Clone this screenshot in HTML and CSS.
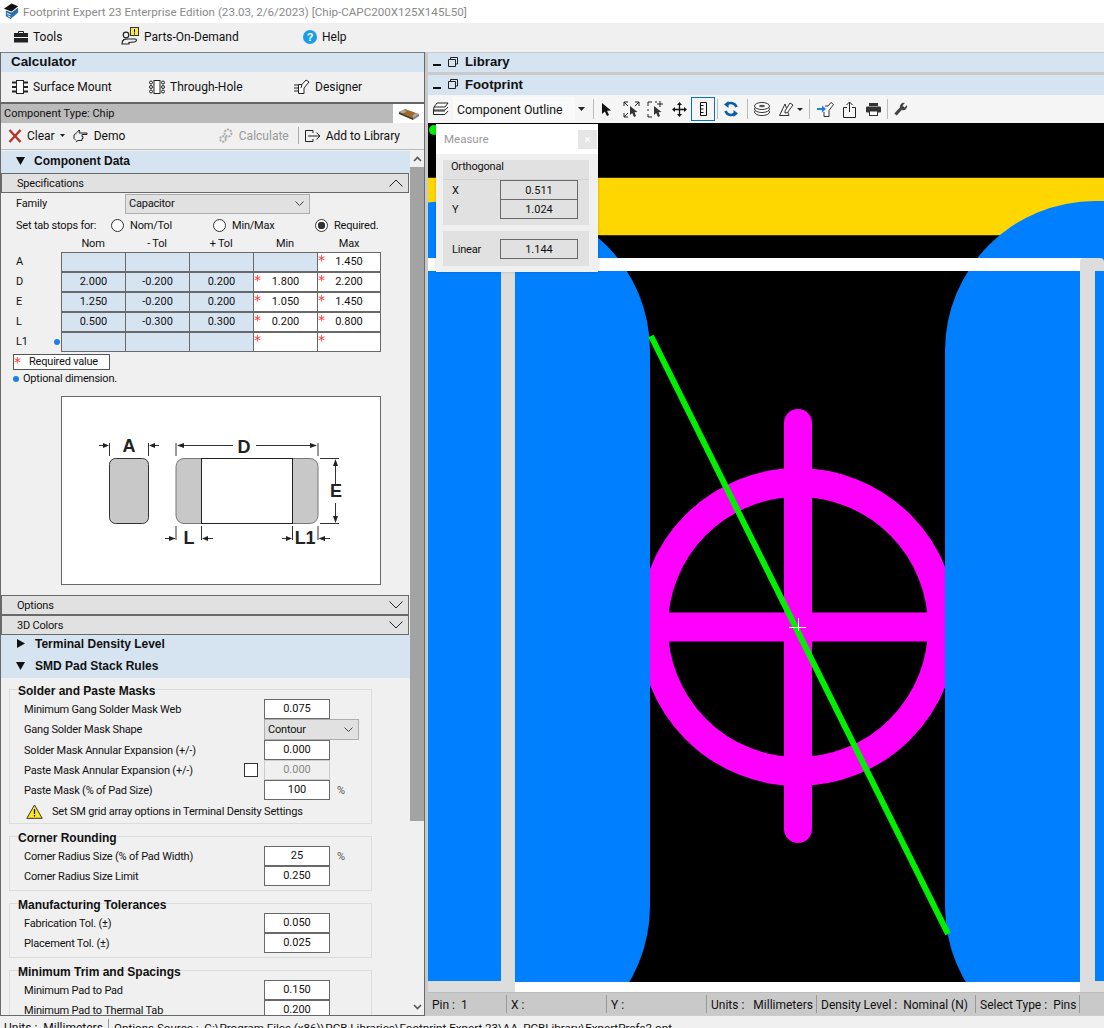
FILE: index.html
```html
<!DOCTYPE html>
<html lang="en">
<head>
    <meta charset="UTF-8">
    <title>Footprint Expert 23 Enterprise Edition</title>
    <link rel="stylesheet" href="styles.css">
</head>
<body>
<div class="app">
    <div class="titlebar">
        <svg class="title-icon" width="17" height="17" viewBox="0 0 18 18"><path d="M1 6 L9 0.500 L16 3.500 L9 9 Z" fill="#111"/><path d="M3 8 L9 10 L16 5 L16 10 L8 17 L3 14 Z" fill="#2a6fb5"/><path d="M4 11 L8 12.500 M5 13.500 L8 15" stroke="#fff"/></svg>
        <span>Footprint Expert 23 Enterprise Edition (23.03, 2/6/2023) [Chip-CAPC200X125X145L50]</span>
    </div>

    <div class="menubar">
        <div class="menu-item">
            <svg width="14" height="12" viewBox="0 0 14 12"><path d="M4.500 2.500 V0.500 H9.500 V2.500" fill="none" stroke="#222"/><rect y="2" width="14" height="4" fill="#222"/><rect y="7" width="14" height="4.500" fill="#222"/></svg>
            <span>Tools</span>
        </div>
        <div class="menu-item">
            <svg width="18" height="19" viewBox="0 0 18 19"><rect x="9.500" y="0.500" width="8" height="8" fill="#ffe64d" stroke="#333"/><path d="M13.500 2 V5.500 M13.500 6.200 V7.500" stroke="#111"/><circle cx="5" cy="8" r="2.800" fill="none" stroke="#222" stroke-width="1.200"/><path d="M1 17 C1 12 4 12 7 12 L14 12 C16 12 16 15 13 15 L8 15.500 L8 17 Z" fill="none" stroke="#222" stroke-width="1.200"/></svg>
            <span>Parts-On-Demand</span>
        </div>
        <div class="menu-item">
            <svg width="14" height="14" viewBox="0 0 14 14"><circle cx="7" cy="7" r="7" fill="#1c9be6"/><text x="7" y="11" text-anchor="middle" class="help-mark">?</text></svg>
            <span>Help</span>
        </div>
    </div>

    <div class="main">
        <div class="left-panel">
            <div class="calc-head">Calculator</div>

            <div class="tabs">
                <div class="tab">
                    <svg width="16" height="14" viewBox="0 0 16 14"><rect x="4.500" y="0.500" width="7" height="13" fill="#fff" stroke="#222"/><path d="M0 2.500 H4 M0 7 H4 M0 11.500 H4 M12 2.500 H16 M12 7 H16 M12 11.500 H16" stroke="#222" stroke-width="2"/></svg>
                    <span>Surface Mount</span>
                </div>
                <div class="tab">
                    <svg width="16" height="14" viewBox="0 0 16 14"><rect x="5" y="0.500" width="6" height="13" fill="#fff" stroke="#222"/><g fill="none" stroke="#222"><circle cx="2" cy="2.500" r="1.500"/><circle cx="2" cy="7" r="1.500"/><circle cx="2" cy="11.500" r="1.500"/><circle cx="14" cy="2.500" r="1.500"/><circle cx="14" cy="7" r="1.500"/><circle cx="14" cy="11.500" r="1.500"/></g></svg>
                    <span>Through-Hole</span>
                </div>
                <div class="tab">
                    <svg width="16" height="15" viewBox="0 0 16 15"><path d="M0 6 H4 M0 9 H4 M0 12 H4" stroke="#222"/><path d="M4.500 5.500 H8 L12 1 L15 3 L10 9 V14.500 H4.500 Z" fill="#fff" stroke="#222"/><path d="M8 5.500 L7 9" stroke="#222"/></svg>
                    <span>Designer</span>
                </div>
            </div>

            <div class="type-bar">
                <span>Component Type: Chip</span>
                <div class="type-chip">
                    <svg width="22" height="12" viewBox="0 0 22 12"><path d="M1 4 L7 1 L21 6 L15 10 Z" fill="#9a6b2c"/><path d="M1 4 L6 2 L9 3 L4 6 Z M15 7 L18 5 L21 6 L15 10 Z" fill="#aaa"/><path d="M1 4 L15 10 V12 L1 6 Z" fill="#4a3313"/><path d="M15 10 L21 6 V8 L15 12 Z" fill="#777"/></svg>
                </div>
            </div>

            <div class="actions">
                <svg width="14" height="14" viewBox="0 0 14 14"><path d="M1.500 1 L12.500 13 M12.500 1 L1.500 13" stroke="#b3342a" stroke-width="2.400"/></svg>
                <span class="action-text first-action">Clear</span>
                <svg class="caret-sm" width="5" height="3" viewBox="0 0 5 3"><path d="M0 0 H5 L2.500 3 Z" fill="#222"/></svg>
                <svg class="demo-icon" width="15" height="14" viewBox="0 0 15 14"><path d="M1 6 L4 3.500 L6 1 L7 2 L6 4 H14 V5.500 H9 M9 5.500 V7.500 H10 V9.500 H9 V11.500 H5 L3 13 M1 6 V9.500 L3 11.500" fill="none" stroke="#222"/></svg>
                <span class="action-text">Demo</span>
                <svg class="calc-icon" width="14" height="15" viewBox="0 0 14 15"><circle cx="9" cy="5" r="3.500" fill="none" stroke="#aaa" stroke-width="2" stroke-dasharray="2 1"/><circle cx="4" cy="11" r="2.800" fill="none" stroke="#aaa" stroke-width="2" stroke-dasharray="2 1"/></svg>
                <span class="action-text muted">Calculate</span>
                <div class="action-sep"></div>
                <svg width="16" height="12" viewBox="0 0 16 12"><path d="M8 3 V0.500 H0.500 V11.500 H8 V9 M3 6 H15 M11.500 2.500 L15 6 L11.500 9.500" fill="none" stroke="#222"/></svg>
                <span class="action-text add-lib">Add to Library</span>
            </div>

            <div class="scroll-area">
                <div class="scroll-content">
                    <div class="tree-head first">
                        <svg width="10" height="8" viewBox="0 0 10 8"><path d="M0 0 H9 L4.500 8 Z" fill="#111"/></svg>
                        <span>Component Data</span>
                    </div>
                    <div class="section-bar">
                        <span>Specifications</span>
                        <svg width="14" height="8" viewBox="0 0 14 8"><path d="M0.500 7.500 L7 1 L13.500 7.500" fill="none" stroke="#222"/></svg>
                    </div>

                    <div class="family-row">
                        <span class="family-label">Family</span>
                        <div class="select family-select">
                            <span>Capacitor</span>
                            <svg width="9" height="5" viewBox="0 0 9 5"><path d="M0.500 0.500 L4.500 4.500 L8.500 0.500" fill="none" stroke="#444"/></svg>
                        </div>
                    </div>

                    <div class="tab-stops">
                        <span class="tab-stops-label">Set tab stops for:</span>
                        <div class="radio-opt"><span class="radio"></span><span>Nom/Tol</span></div>
                        <div class="radio-opt"><span class="radio"></span><span>Min/Max</span></div>
                        <div class="radio-opt"><span class="radio checked"></span><span>Required.</span></div>
                    </div>

                    <div class="spec-heads">
                        <span>Nom</span><span>- Tol</span><span>+ Tol</span><span>Min</span><span>Max</span>
                    </div>
                    <div class="spec-row">
                        <span class="spec-label">A</span>
                        <div class="cell blue"></div><div class="cell blue"></div><div class="cell blue"></div><div class="cell blue"></div><div class="cell req">1.450</div>
                    </div>
                    <div class="spec-row">
                        <span class="spec-label">D</span>
                        <div class="cell blue">2.000</div><div class="cell blue">-0.200</div><div class="cell blue">0.200</div><div class="cell req">1.800</div><div class="cell req">2.200</div>
                    </div>
                    <div class="spec-row">
                        <span class="spec-label">E</span>
                        <div class="cell blue">1.250</div><div class="cell blue">-0.200</div><div class="cell blue">0.200</div><div class="cell req">1.050</div><div class="cell req">1.450</div>
                    </div>
                    <div class="spec-row">
                        <span class="spec-label">L</span>
                        <div class="cell blue">0.500</div><div class="cell blue">-0.300</div><div class="cell blue">0.300</div><div class="cell req">0.200</div><div class="cell req">0.800</div>
                    </div>
                    <div class="spec-row">
                        <span class="spec-label">L1<i class="dot"></i></span>
                        <div class="cell blue"></div><div class="cell blue"></div><div class="cell blue"></div><div class="cell req"></div><div class="cell req"></div>
                    </div>

                    <div class="required-note">Required value</div>
                    <div class="optional-note"><i class="dot"></i><span>Optional dimension.</span></div>

                    <div class="diagram">
                        <svg width="318" height="187" viewBox="62 397 318 187">
                            <rect x="109.500" y="458.500" width="39" height="65" rx="6" fill="#c8c8c8" stroke="#333"/>
                            <rect x="176" y="458.500" width="142" height="65" rx="8" fill="#c8c8c8" stroke="#777"/>
                            <rect x="201.500" y="458.500" width="91" height="65" fill="#fff" stroke="#222"/>
                            <g stroke="#333" fill="none">
                                <path d="M109.500 443 V456 M148.500 443 V456 M176 443 V456 M318 443 V456"/>
                                <path d="M99 445.500 H108 M150 445.500 H159 M178 445.500 H233 M256 445.500 H316"/>
                                <path d="M320 458.500 H339 M320 523.500 H339 M335.500 461 V484 M335.500 503 V521"/>
                                <path d="M176 526 V540 M201.500 526 V540 M292.500 526 V540 M318 526 V540"/>
                                <path d="M165 538.500 H175 M203 538.500 H213 M282 538.500 H291 M320 538.500 H330"/>
                            </g>
                            <g fill="#222">
                                <path d="M109 445.500 L103 443 V448 Z M149 445.500 L155 443 V448 Z M177 445.500 L184 443 V448 Z M317 445.500 L310 443 V448 Z"/>
                                <path d="M335.500 459 L333 466 H338 Z M335.500 523 L333 516 H338 Z"/>
                                <path d="M175.500 538.500 L169 536 V541 Z M202 538.500 L208 536 V541 Z M292 538.500 L286 536 V541 Z M318.500 538.500 L325 536 V541 Z"/>
                            </g>
                            <g class="dim-text">
                                <text x="129" y="452" text-anchor="middle">A</text>
                                <text x="244" y="453" text-anchor="middle">D</text>
                                <text x="336" y="497" text-anchor="middle">E</text>
                                <text x="189" y="544" text-anchor="middle">L</text>
                                <text x="305" y="544" text-anchor="middle">L1</text>
                            </g>
                        </svg>
                    </div>

                    <div class="section-bar spaced">
                        <span>Options</span>
                        <svg width="14" height="8" viewBox="0 0 14 8"><path d="M0.500 0.500 L7 7 L13.500 0.500" fill="none" stroke="#222"/></svg>
                    </div>
                    <div class="section-bar">
                        <span>3D Colors</span>
                        <svg width="14" height="8" viewBox="0 0 14 8"><path d="M0.500 0.500 L7 7 L13.500 0.500" fill="none" stroke="#222"/></svg>
                    </div>
                    <div class="tree-head short">
                        <svg width="8" height="10" viewBox="0 0 8 10"><path d="M0 0 V9 L8 4.500 Z" fill="#111"/></svg>
                        <span>Terminal Density Level</span>
                    </div>
                    <div class="tree-head">
                        <svg width="10" height="8" viewBox="0 0 10 8"><path d="M0 0 H9 L4.500 8 Z" fill="#111"/></svg>
                        <span>SMD Pad Stack Rules</span>
                    </div>

                    <div class="group group-first">
                        <div class="group-title">Solder and Paste Masks</div>
                        <div class="form-row"><span>Minimum Gang Solder Mask Web</span><div class="num">0.075</div></div>
                        <div class="form-row tall"><span>Gang Solder Mask Shape</span>
                            <div class="select shape-select"><span>Contour</span><svg width="9" height="5" viewBox="0 0 9 5"><path d="M0.500 0.500 L4.500 4.500 L8.500 0.500" fill="none" stroke="#444"/></svg></div>
                        </div>
                        <div class="form-row"><span>Solder Mask Annular Expansion (+/-)</span><div class="num">0.000</div></div>
                        <div class="form-row"><span class="label-check">Paste Mask Annular Expansion (+/-)<i class="checkbox"></i></span><div class="num off">0.000</div></div>
                        <div class="form-row"><span>Paste Mask (% of Pad Size)</span><div class="num">100</div><span class="unit">%</span></div>
                        <div class="warn-row">
                            <svg width="17" height="15" viewBox="0 0 17 15"><path d="M8.500 1 L16.200 14.300 H0.800 Z" fill="#ffe81a" stroke="#333"/><path d="M8.500 5 V10 M8.500 11 V12.500" stroke="#111" stroke-width="1.300"/></svg>
                            <span>Set SM grid array options in Terminal Density Settings</span>
                        </div>
                    </div>

                    <div class="group">
                        <div class="group-title">Corner Rounding</div>
                        <div class="form-row"><span>Corner Radius Size (% of Pad Width)</span><div class="num">25</div><span class="unit">%</span></div>
                        <div class="form-row"><span>Corner Radius Size Limit</span><div class="num">0.250</div></div>
                    </div>

                    <div class="group">
                        <div class="group-title">Manufacturing Tolerances</div>
                        <div class="form-row"><span>Fabrication Tol. (±)</span><div class="num">0.050</div></div>
                        <div class="form-row"><span>Placement Tol. (±)</span><div class="num">0.025</div></div>
                    </div>

                    <div class="group">
                        <div class="group-title">Minimum Trim and Spacings</div>
                        <div class="form-row"><span>Minimum Pad to Pad</span><div class="num">0.150</div></div>
                        <div class="form-row"><span>Minimum Pad to Thermal Tab</span><div class="num">0.200</div></div>
                    </div>
                </div>

                <div class="scrollbar">
                    <div class="scroll-btn"><svg width="9" height="6" viewBox="0 0 9 6"><path d="M1 5 L4.500 1.500 L8 5" fill="none" stroke="#555" stroke-width="1.600"/></svg></div>
                    <div class="scroll-thumb"></div>
                    <div class="scroll-track"></div>
                    <div class="scroll-btn"><svg width="9" height="6" viewBox="0 0 9 6"><path d="M1 1 L4.500 4.500 L8 1" fill="none" stroke="#555" stroke-width="1.600"/></svg></div>
                </div>
            </div>
        </div>

        <div class="right-panel">
            <div class="pane-head library">
                <i class="minimize"></i>
                <svg width="10" height="10" viewBox="0 0 10 10"><path d="M2.500 2.500 V0.500 H9.500 V7 H7.500 M0.500 2.500 H7.500 V9.500 H0.500 Z" fill="none" stroke="#222"/></svg>
                <span>Library</span>
            </div>
            <div class="pane-head">
                <i class="minimize"></i>
                <svg width="10" height="10" viewBox="0 0 10 10"><path d="M2.500 2.500 V0.500 H9.500 V7 H7.500 M0.500 2.500 H7.500 V9.500 H0.500 Z" fill="none" stroke="#222"/></svg>
                <span>Footprint</span>
            </div>

            <div class="fp-toolbar">
                <svg class="layers-icon" width="16" height="14" viewBox="0 0 16 14"><path d="M4 1 H15 L12 5 H1 Z M1 5 L0.500 8 H12 L15 5 M0.500 8 V9 L0.500 12.500 H12 L15 9 M0.500 9 H12" fill="#fff" stroke="#222"/></svg>
                <div class="layer-select"><span>Component Outline</span></div>
                <svg class="layer-caret" width="7" height="4" viewBox="0 0 7 4"><path d="M0 0 H7 L3.500 4 Z" fill="#222"/></svg>
                <div class="tb-sep first-sep"></div>
                <div class="tb-btn"><svg width="12" height="15" viewBox="0 0 12 15"><path d="M1 1 V12 L3.800 9.500 L6 14 L8 13 L6 8.800 L10 8.500 Z" fill="#111"/></svg></div>
                <div class="tb-btn"><svg width="17" height="17" viewBox="0 0 17 17"><path d="M1 5 V1 H5 M12 1 H16 V5 M1 12 V16 H5 M1 1 L5 5 M16 1 L12 5 M1 16 L5 12" fill="none" stroke="#222"/><path d="M7 5 V14 L9.200 12 L11 16 L13 15 L11.500 11.300 L14.500 11 Z" fill="#333"/></svg></div>
                <div class="tb-btn"><svg width="17" height="17" viewBox="0 0 17 17"><path d="M1 5 V1 H5 M8 1 H10 M1 8 V10 M1 13 V16 H5" fill="none" stroke="#222"/><path d="M13 0 V6 M10 3 H16" stroke="#222"/><path d="M7 5 V14 L9.200 12 L11 16 L13 15 L11.500 11.300 L14.500 11 Z" fill="#333"/></svg></div>
                <div class="tb-btn"><svg width="15" height="15" viewBox="0 0 15 15"><path d="M7.500 2 V13 M2 7.500 H13" stroke="#111" stroke-width="1.300"/><path d="M7.500 0 L10 3 H5 Z M7.500 15 L10 12 H5 Z M0 7.500 L3 5 V10 Z M15 7.500 L12 5 V10 Z" fill="#111"/></svg></div>
                <div class="tb-btn active"><svg width="7" height="14" viewBox="0 0 7 14"><path d="M0.500 0.500 H6.500 V13.500 H0.500 Z M0.500 3.500 H3.500 M0.500 7 H3.500 M0.500 10.500 H3.500" fill="none" stroke="#111"/></svg></div>
                <div class="tb-sep"></div>
                <div class="tb-btn"><svg width="14" height="16" viewBox="0 0 14 16"><path d="M12.500 6 A6 6 0 0 0 3 3.500 M1.500 10 A6 6 0 0 0 11 12.500" fill="none" stroke="#0a5fa8" stroke-width="2.600"/><path d="M4.500 0 V7 L0 3.500 Z M9.500 16 V9 L14 12.500 Z" fill="#0a5fa8"/></svg></div>
                <div class="tb-sep sep-b"></div>
                <div class="tb-btn"><svg width="16" height="14" viewBox="0 0 16 14"><g fill="#fff" stroke="#333"><ellipse cx="8" cy="10" rx="7.500" ry="3.500"/><ellipse cx="8" cy="7" rx="7.500" ry="3.500"/><ellipse cx="8" cy="4" rx="7.500" ry="3.500"/></g><ellipse cx="8" cy="4" rx="3" ry="1.300" fill="#555"/></svg></div>
                <div class="tb-btn pen-btn">
                    <svg width="15" height="14" viewBox="0 0 15 14"><path d="M0.500 13.500 L6 2 L10 13.500 Z" fill="none" stroke="#333"/><path d="M6 9 L11 1 L14 3 L8.500 10.500 L6 11 Z" fill="#fff" stroke="#333"/></svg>
                    <svg width="6" height="3" viewBox="0 0 6 3"><path d="M0 0 H6 L3 3 Z" fill="#222"/></svg>
                </div>
                <div class="tb-sep sep-c"></div>
                <div class="tb-btn"><svg width="17" height="15" viewBox="0 0 17 15"><path d="M8 4 H11 L14 0.500 L16.500 2.500 L12 8.500 V14.500 H7 V10" fill="#fff" stroke="#333"/><path d="M0 6 H5 V3.500 L9 7 L5 10.500 V8 H0 Z" fill="#1d7fe6"/></svg></div>
                <div class="tb-btn"><svg width="13" height="17" viewBox="0 0 13 17"><path d="M4 6.500 H0.500 V16.500 H12.500 V6.500 H9 M6.500 11 V1.500 M3.500 4 L6.500 1 L9.500 4" fill="none" stroke="#222"/></svg></div>
                <div class="tb-btn"><svg width="15" height="13" viewBox="0 0 15 13"><rect x="3" y="0" width="9" height="3" fill="#333"/><rect x="0" y="3.500" width="15" height="6" rx="1" fill="#333"/><rect x="3.500" y="8" width="8" height="4.500" fill="#fff" stroke="#333"/></svg></div>
                <div class="tb-sep"></div>
                <div class="tb-btn"><svg width="14" height="14" viewBox="0 0 14 14"><path d="M1.500 12.500 L7 6.500" stroke="#444" stroke-width="3.200"/><path d="M6 6 A4 4 0 0 1 11 1 L8.500 3.500 L10.500 5.500 L13 3 A4 4 0 0 1 8 8 Z" fill="#444"/></svg></div>
            </div>

            <div class="canvas">
                <svg class="board" width="676" height="869" viewBox="428 123 676 869">
                    <rect x="428" y="123" width="676" height="869" fill="#000"/>
                    <rect x="428" y="178" width="676" height="57" fill="#ffd700"/>
                    <path d="M428 177.500 H1104 M428 235.500 H1104" stroke="#3a3200"/>
                    <g fill="none" stroke="#ff00ff" stroke-width="29">
                        <circle cx="798" cy="627" r="144.500"/>
                        <path d="M640 627 H956"/>
                    </g>
                    <path d="M798 423 V829" stroke="#ff00ff" stroke-width="28" stroke-linecap="round"/>
                    <rect x="300" y="201" width="350" height="855" rx="150" fill="#0080ff"/>
                    <rect x="945" y="201" width="350" height="855" rx="150" fill="#0080ff"/>
                    <rect x="428" y="258" width="660" height="13" fill="#fff"/>
                    <rect x="501" y="271" width="14" height="721" fill="#ddd"/>
                    <rect x="428" y="981" width="74" height="11" fill="#ddd"/>
                    <rect x="515" y="982" width="566" height="10" fill="#fff"/>
                    <rect x="1080" y="258" width="24" height="20" rx="4" fill="#ddd"/>
                    <rect x="1095" y="271" width="9" height="710" fill="#0080ff"/>
                    <rect x="1080" y="268" width="15" height="724" fill="#ddd"/>
                    <rect x="1095" y="981" width="9" height="11" fill="#ddd"/>
                    <path d="M651 336 L948 934" stroke="#00f000" stroke-width="6"/>
                    <path d="M798.500 618 V631 M789 627.500 H806" fill="none" stroke="#fff"/>
                    <circle cx="434" cy="130" r="5" fill="#00f000"/>
                </svg>

                <div class="measure">
                    <div class="measure-title">
                        <span>Measure</span>
                        <div class="measure-close">×</div>
                    </div>
                    <div class="measure-group ortho">
                        <div class="ortho-title">Orthogonal</div>
                        <div class="measure-row"><span>X</span><div class="measure-val">0.511</div></div>
                        <div class="measure-row second"><span>Y</span><div class="measure-val">1.024</div></div>
                    </div>
                    <div class="measure-group linear">
                        <div class="measure-row"><span>Linear</span><div class="measure-val">1.144</div></div>
                    </div>
                </div>
            </div>

            <div class="fp-status">
                <div class="st-cell st-pin"><span>Pin :</span><span>1</span></div>
                <div class="st-cell st-xy">X :</div>
                <div class="st-cell st-xy">Y :</div>
                <div class="st-cell st-units"><span>Units :</span><span>Millimeters</span></div>
                <div class="st-cell st-density"><span>Density Level :</span><span>Nominal (N)</span></div>
                <div class="st-cell st-select"><span>Select Type :</span><span>Pins</span></div>
            </div>
        </div>
    </div>

    <div class="statusbar">
        <span class="status-units">Units :  Millimeters</span>
        <span class="status-source">Options Source :  C:\Program Files (x86)\PCB Libraries\Footprint Expert 23\AA_PCBLibrary\ExpertPrefs2.opt</span>
    </div>
</div>
</body>
</html>
```

FILE: styles.css
```css
* {
    margin: 0;
    padding: 0;
    box-sizing: border-box;
}

body {
    background: #f0f0f0;
    font-family: Roboto, "Noto Sans", sans-serif;
    font-size: 11px;
    letter-spacing: -0.2px;
    color: #111;
}

i {
    font-style: normal;
}

svg {
    display: block;
    flex: none;
}

.app {
    width: 1104px;
    height: 1028px;
    overflow: hidden;
    display: flex;
    flex-direction: column;
}

/* title + menu */
.titlebar {
    height: 23px;
    background: #fff;
    display: flex;
    align-items: center;
    padding-left: 3px;
    gap: 3px;
    color: #8a8a8a;
    font-size: 11.600px;
    letter-spacing: 0;
    white-space: nowrap;
}

.menubar {
    height: 29px;
    display: grid;
    grid-template-columns: 107px 182px auto;
    align-items: center;
    padding: 0 0 2px 14px;
    font-size: 12px;
    letter-spacing: 0;
}

.menu-item {
    display: flex;
    align-items: center;
    gap: 5px;
}

.help-mark {
    font-family: "Liberation Sans", sans-serif;
    font-size: 11px;
    font-weight: bold;
    fill: #fff;
}

.main {
    height: 964px;
    display: flex;
    background: #c9c9c9;
}

/* left panel */
.left-panel {
    width: 425px;
    border-left: 1px solid #696969;
    border-right: 1px solid #696969;
    border-bottom: 1px solid #696969;
    background: #f0f0f0;
    display: flex;
    flex-direction: column;
}

.calc-head {
    height: 20px;
    background: #d6e4f2;
    border-top: 1px solid #808080;
    padding-left: 10px;
    line-height: 18px;
    font-family: "Liberation Sans", sans-serif;
    font-size: 13.400px;
    font-weight: bold;
    letter-spacing: 0;
}

.tabs {
    height: 30px;
    display: grid;
    grid-template-columns: 137px 145px auto;
    align-items: center;
    padding: 0 0 1px 11px;
    font-size: 12px;
    letter-spacing: 0;
}

.tab {
    display: flex;
    align-items: center;
    gap: 5px;
}

.type-bar {
    height: 21px;
    background: #bababa;
    border-top: 2px solid #666;
    display: flex;
    align-items: center;
    justify-content: space-between;
    padding-left: 3px;
    letter-spacing: 0;
}

.type-bar > span {
    margin-top: -1px;
}

.type-chip {
    width: 31px;
    height: 19px;
    background: #fff;
    display: flex;
    align-items: center;
    justify-content: center;
}

.actions {
    height: 27px;
    display: flex;
    align-items: center;
    padding: 0 0 1px 7px;
    border-bottom: 1px solid #bbb;
    font-size: 12px;
    letter-spacing: 0;
}

.action-text {
    margin-left: 6px;
}

.first-action {
    margin-left: 5px;
}

.muted {
    color: #999;
}

.caret-sm {
    margin-left: 5px;
}

.demo-icon {
    margin-left: 8px;
}

.calc-icon {
    margin-left: auto;
}

.action-sep {
    width: 1px;
    height: 17px;
    background: #aaa;
    margin: 0 6px 0 9px;
}

.add-lib {
    margin: 0 24px 0 5px;
}

.scroll-area {
    flex: 1;
    min-height: 0;
    display: flex;
}

.scroll-content {
    width: 409px;
    overflow: hidden;
}

.tree-head {
    height: 23px;
    background: #d6e4f2;
    display: flex;
    align-items: center;
    padding: 0 0 2px 15px;
    gap: 9px;
    font-family: "Liberation Sans", sans-serif;
    font-size: 12px;
    font-weight: bold;
    letter-spacing: 0;
}

.tree-head.first {
    margin-top: 1px;
    height: 22px;
    gap: 8px;
}

.tree-head.short {
    height: 20px;
    padding-left: 16px;
    gap: 10px;
}

.section-bar {
    width: 408px;
    height: 20px;
    background: #e1e1e1;
    border: 1px solid #696969;
    display: flex;
    align-items: center;
    justify-content: space-between;
    padding: 0 5px 0 15px;
}

.section-bar.spaced {
    margin-top: 10px;
}

.family-row {
    height: 21px;
    display: flex;
    align-items: center;
    padding-left: 15px;
}

.family-label {
    width: 109px;
}

.select {
    height: 20px;
    background: #e1e1e1;
    border: 1px solid #adadad;
    display: flex;
    align-items: center;
    justify-content: space-between;
    padding: 0 5px 0 3px;
}

.family-select {
    width: 185px;
}

.shape-select {
    width: 95px;
    height: 21px;
}

.tab-stops {
    height: 22px;
    display: grid;
    grid-template-columns: 95px 102px 102px auto;
    align-items: center;
    padding-left: 15px;
}

.radio-opt {
    display: flex;
    align-items: center;
    gap: 6px;
}

.radio {
    width: 13px;
    height: 13px;
    border: 1px solid #333;
    border-radius: 50%;
    background: #fff;
}

.radio.checked {
    background: radial-gradient(circle, #333 0 3.500px, #fff 4px);
}

.spec-heads {
    height: 16px;
    display: grid;
    grid-template-columns: repeat(5, 64px);
    margin-left: 60px;
    text-align: center;
    line-height: 16px;
}

.spec-row {
    height: 20px;
    display: flex;
}

.spec-label {
    width: 60px;
    padding-left: 15px;
    line-height: 19px;
    position: relative;
}

.spec-label .dot {
    position: absolute;
    left: 53px;
    top: 7px;
}

.dot {
    display: inline-block;
    width: 6px;
    height: 6px;
    border-radius: 50%;
    background: #1d7fe6;
}

.cell {
    width: 64px;
    border: 1px solid #696969;
    border-right: 0;
    background: #fff;
    text-align: center;
    line-height: 17px;
    letter-spacing: 0;
    position: relative;
}

.cell:last-child {
    border-right: 1px solid #696969;
}

.cell.blue {
    background: #d6e4f2;
}

.cell.req::before,
.required-note::before {
    content: "*";
    position: absolute;
    left: 0;
    top: 0;
    color: #f33;
    font-family: "DejaVu Sans", sans-serif;
    font-size: 14px;
    line-height: 14px;
}

.required-note {
    position: relative;
    width: 97px;
    height: 16px;
    margin: 2px 0 0 12px;
    border: 1px solid #555;
    background: #fff;
    padding-left: 15px;
    line-height: 14px;
    white-space: nowrap;
}

.optional-note {
    height: 17px;
    display: flex;
    align-items: center;
    gap: 4px;
    padding-left: 12px;
}

.diagram {
    width: 320px;
    height: 189px;
    margin: 9px 0 0 60px;
    background: #fff;
    border: 1px solid #696969;
}

.dim-text {
    font-family: "Liberation Sans", sans-serif;
    font-size: 18px;
    font-weight: bold;
    fill: #222;
}

/* grouped form rows */
.group {
    width: 363px;
    margin: 12px 0 0 8px;
    padding-bottom: 4px;
    border: 1px solid #dcdcdc;
}

.group-first {
    margin-top: 11px;
    padding-bottom: 0;
}

.group-title {
    height: 9px;
    margin: 0 0 0 8px;
    line-height: 0;
    font-family: "Liberation Sans", sans-serif;
    font-size: 12px;
    font-weight: bold;
    letter-spacing: 0;
    padding-top: 1px;
}

.form-row {
    height: 20px;
    display: grid;
    grid-template-columns: 240px 66px auto;
    align-items: center;
    padding-left: 14px;
}

.form-row.tall {
    height: 21px;
}

.label-check {
    display: flex;
    align-items: center;
    justify-content: space-between;
    padding-right: 6px;
}

.checkbox {
    width: 14px;
    height: 14px;
    border: 1px solid #333;
    background: #fff;
}

.num {
    height: 20px;
    border: 1px solid #696969;
    background: #fff;
    text-align: center;
    line-height: 18px;
    letter-spacing: 0;
}

.num.off {
    background: #f0f0f0;
    border-color: #ccc;
    color: #888;
}

.unit {
    margin-left: 7px;
    color: #555;
}

.warn-row {
    height: 23px;
    display: flex;
    align-items: center;
    gap: 9px;
    padding-left: 16px;
}

.scrollbar {
    width: 14px;
    display: flex;
    flex-direction: column;
}

.scroll-btn {
    height: 17px;
    display: flex;
    align-items: center;
    justify-content: center;
}

.scroll-thumb {
    height: 654px;
    background: #a3a3a3;
}

.scroll-track {
    flex: 1;
}

/* right panel */
.right-panel {
    width: 676px;
    margin-left: 3px;
    display: flex;
    flex-direction: column;
}

.pane-head {
    height: 20px;
    background: #d6e4f2;
    display: flex;
    align-items: center;
    padding: 0 0 2px 5px;
    gap: 7px;
    font-family: "Liberation Sans", sans-serif;
    font-size: 13.200px;
    font-weight: bold;
    letter-spacing: 0;
}

.pane-head.library {
    height: 19px;
    margin: 1px 0 3px;
}

.minimize {
    width: 8px;
    height: 2px;
    margin-top: 7px;
    background: #111;
}

.fp-toolbar {
    height: 28px;
    background: #f5f5f5;
    display: flex;
    align-items: center;
    font-size: 12.300px;
    letter-spacing: 0;
}

.layers-icon {
    margin-left: 5px;
}

.layer-select {
    width: 122px;
    height: 24px;
    margin-left: 4px;
    background: #f9f9f9;
    padding: 1px 0 0 4px;
    line-height: 24px;
    white-space: nowrap;
}

.layer-caret {
    margin-left: 3px;
}

.tb-sep {
    width: 1px;
    height: 20px;
    background: #bbb;
    margin: 0 1px 0 2px;
}

.first-sep {
    margin-left: 8px;
}

.sep-b {
    margin: 0 2px 0 4px;
}

.sep-c {
    margin: 0 3px 0 1px;
}

.tb-btn {
    width: 24px;
    height: 24px;
    display: flex;
    align-items: center;
    justify-content: center;
    flex: none;
}

.tb-btn.active {
    border: 1px solid #0a6fc2;
}

.pen-btn {
    width: 34px;
    gap: 3px;
}

.canvas {
    position: relative;
    height: 869px;
    overflow: hidden;
}

.measure {
    position: absolute;
    left: 8px;
    top: 1px;
    width: 162px;
    height: 148px;
    background: #f0f0f0;
    box-shadow: 0 0 3px rgba(0, 0, 0, 0.2);
}

.measure-title {
    height: 30px;
    background: #fff;
    display: flex;
    align-items: center;
    justify-content: space-between;
    padding: 0 1px 0 8px;
    color: #999;
    font-size: 11.500px;
    letter-spacing: 0;
}

.measure-close {
    width: 19px;
    height: 19px;
    background: #e6e6e6;
    color: #fff;
    text-align: center;
    line-height: 18px;
}

.measure-group {
    width: 146px;
    margin: 6px 0 0 7px;
    background: #e1e1e1;
    padding-left: 9px;
}

.ortho {
    height: 65px;
}

.ortho-title {
    height: 20px;
    line-height: 14px;
    border-bottom: 1px solid #d2d2d2;
    margin-left: -9px;
    padding-left: 8px;
    width: 146px;
}

.linear {
    height: 35px;
    padding-top: 8px;
}

.measure-row {
    height: 20px;
    display: grid;
    grid-template-columns: 48px 78px;
    align-items: center;
}

.measure-row > span {
    padding-top: 1px;
}

.measure-row.second {
    margin-top: -1px;
}

.measure-val {
    height: 20px;
    border: 1px solid #696969;
    text-align: center;
    line-height: 19px;
    letter-spacing: 0;
}

.fp-status {
    height: 24px;
    border-top: 1px solid #bbb;
    border-bottom: 1px solid #ccc;
    display: flex;
    align-items: center;
    font-size: 12px;
    letter-spacing: 0;
}

.st-cell {
    height: 18px;
    border-right: 1px solid #999;
    display: flex;
    align-items: center;
    gap: 6px;
    padding: 1px 0 0 4px;
    white-space: nowrap;
}

.st-pin {
    width: 79px;
}

.st-xy {
    width: 100px;
}

.st-units {
    width: 110px;
    gap: 9px;
}

.st-density {
    width: 159px;
}

.st-select {
    width: 104px;
}

.statusbar {
    flex: 1;
    min-height: 0;
    display: flex;
    align-items: flex-start;
    padding: 3px 0 0 4px;
    overflow: hidden;
    white-space: pre;
    font-size: 12px;
    letter-spacing: 0;
}

.status-units {
    width: 105px;
    height: 18px;
    border-right: 1px solid #999;
    line-height: 18px;
}

.status-source {
    margin-left: 5px;
    line-height: 18px;
    font-size: 11.600px;
}
```
